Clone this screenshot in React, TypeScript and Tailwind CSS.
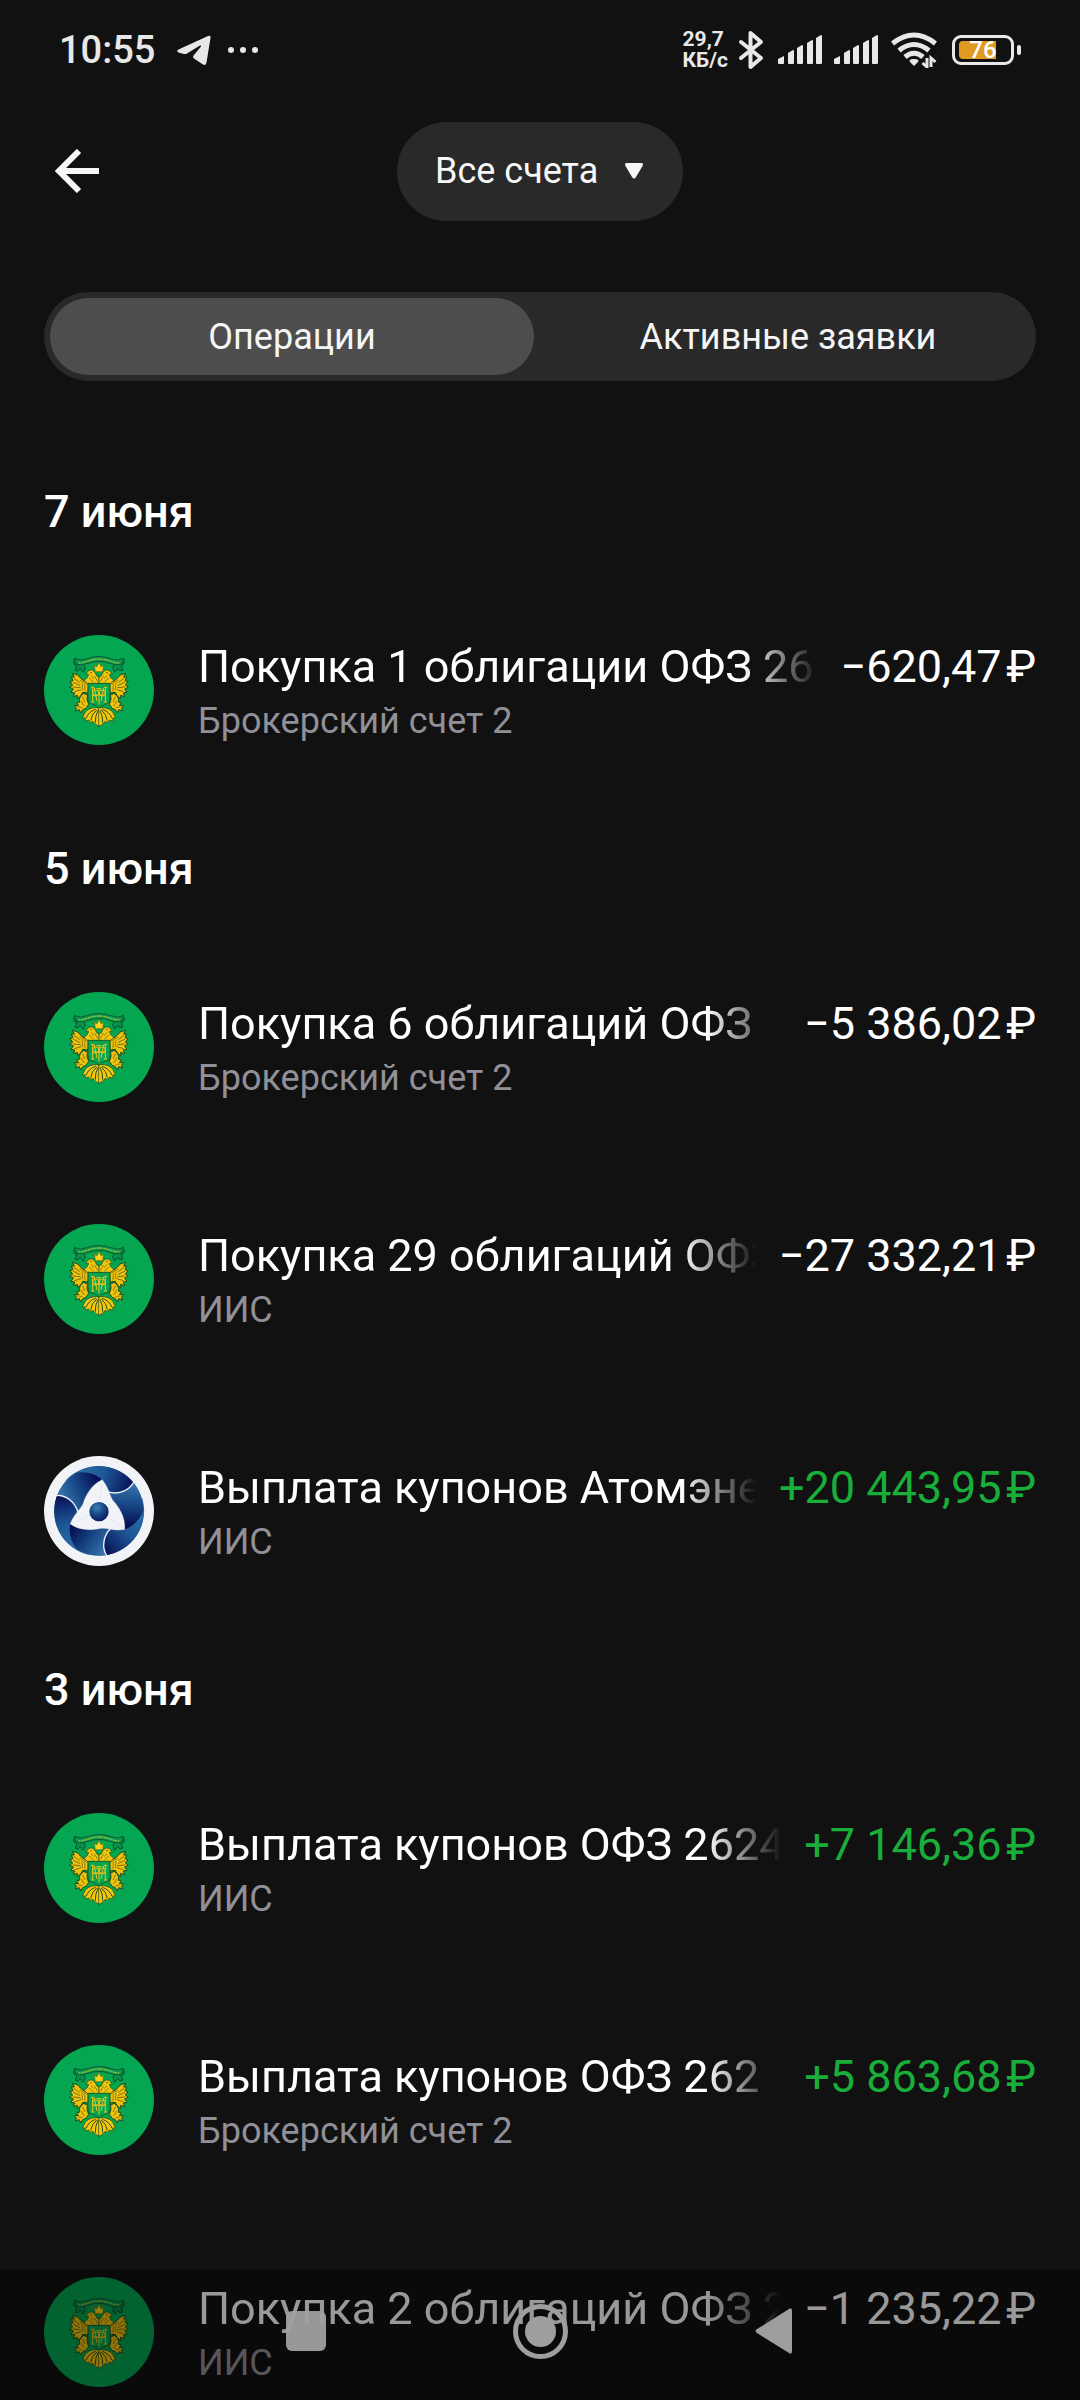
type Operation = {
  title: string;
  account: string;
  amount: string;
  income?: boolean;
  logo?: "eagle" | "atom";
};

type Day = { date: string; operations: Operation[] };

const DAYS: Day[] = [
  {
    date: "7 июня",
    operations: [{ title: "Покупка 1 облигации ОФЗ 26", account: "Брокерский счет 2", amount: "−620,47" }],
  },
  {
    date: "5 июня",
    operations: [
      { title: "Покупка 6 облигаций ОФЗ", account: "Брокерский счет 2", amount: "−5 386,02" },
      { title: "Покупка 29 облигаций ОФЗ", account: "ИИС", amount: "−27 332,21" },
      { title: "Выплата купонов Атомэне", account: "ИИС", amount: "+20 443,95", income: true, logo: "atom" },
    ],
  },
  {
    date: "3 июня",
    operations: [
      { title: "Выплата купонов ОФЗ 2624", account: "ИИС", amount: "+7 146,36", income: true },
      { title: "Выплата купонов ОФЗ 262", account: "Брокерский счет 2", amount: "+5 863,68", income: true },
      { title: "Покупка 2 облигаций ОФЗ 2", account: "ИИС", amount: "−1 235,22" },
    ],
  },
];

function HalfEagle() {
  return (
    <g strokeLinejoin="round" strokeLinecap="round">
      {/* ribbon tail */}
      <path d="M134 113 Q126 130 140 134 L136 148 Q146 154 150 142 L160 154 L166 140 L160 128 Z" fill="#07924a" stroke="#0a4f2e" strokeWidth="3" />
      {/* wing */}
      <path
        d="M128 158 L133 168 L124 168 L129 179 L120 182 L128 192 L119 199 L130 204 L123 214 L134 216 L130 227 L142 223 L142 233 L153 224 L158 214 L174 216 L176 182 Q160 182 152 172 Q144 158 128 158 Z"
        fill="#efc20e"
        stroke="#1f4a1c"
        strokeWidth="3"
      />
      <path d="M132 172 L148 184 M130 184 L149 193 M129 198 L151 200 M134 212 L153 206" stroke="#3b4a12" strokeWidth="2" fill="none" />
      <path d="M156 186 L158 206 M164 190 L165 210 M150 178 L172 190" stroke="#6b6110" strokeWidth="2" fill="none" />
      {/* neck and head */}
      <path d="M207 188 V168 Q200 168 196 156 Q188 142 176 149 L167 160 L176 160 L172 170 L162 178 L176 190 Z" fill="#f3c70e" stroke="#1f4a1c" strokeWidth="2" />
      <path d="M184 164 L190 172 M178 172 L190 182 M194 166 L202 180" stroke="#5a5710" strokeWidth="2" />
      <circle cx="183" cy="155" r="2" fill="#1f3b14" />
      {/* leg and claw */}
      <path d="M160 218 Q146 226 148 244 L140 246 L146 254 L133 254 L140 262 L136 270 L148 266 L152 276 L158 266 L168 262 L176 250 Q168 236 172 222 Z" fill="#efc20e" stroke="#1f4a1c" strokeWidth="3" />
      <path d="M158 228 L164 242 M153 240 L162 254 M146 258 L156 260" stroke="#4f5212" strokeWidth="2" />
      {/* tail feathers */}
      <path d="M207 260 L190 260 Q166 266 163 280 L157 290 L166 291 L165 300 L176 297 L180 305 L189 301 L195 309 L207 316 Z" fill="#f3c70e" stroke="#1f4a1c" strokeWidth="2" />
      <path d="M196 265 Q174 274 169 290 M200 267 Q184 280 182 298 M204 269 Q195 284 196 304" stroke="#2c4a16" strokeWidth="3" fill="none" />
    </g>
  );
}

function EagleLogo() {
  return (
    <svg viewBox="42 42 330 330" className="size-[110px] shrink-0" aria-hidden="true">
      <circle cx="207" cy="207" r="165" fill="#04a651" />
      <HalfEagle />
      <g transform="matrix(-1 0 0 1 414 0)">
        <HalfEagle />
      </g>
      {/* shield */}
      <path d="M174 187 H240 V232 Q240 246 226 250 Q212 254 207 262 Q202 254 188 250 Q174 246 174 232 Z" fill="#04a651" stroke="#1c5a26" strokeWidth="3" />
      <g stroke="#ecc31a" strokeWidth="3" fill="none">
        <path d="M183 199 H193 M188 199 V243 M183 243 H193 M221 199 H231 M226 199 V243 M221 243 H231 M188 222 H226" />
        <path d="M207 201 V250 M199 203 H215 M193 201 L201 240 M221 201 L213 240" />
        <circle cx="197" cy="216" r="9" />
        <circle cx="217" cy="216" r="9" />
      </g>
      {/* crown */}
      <path d="M193 132 L200 138 L207 125 L214 138 L221 132 L218 152 H196 Z" fill="#ffd21a" stroke="#6b6a12" strokeWidth="2" strokeLinejoin="round" />
      {/* ribbon */}
      <path d="M133 113 Q150 121 172 113 Q207 100 242 113 Q264 121 281 113 L276 129 Q256 135 240 127 Q207 116 174 127 Q158 135 138 129 Z" fill="#0b9a4c" stroke="#0a5a34" strokeWidth="3" strokeLinejoin="round" />
      <path d="M146 126 Q160 126 174 120 Q207 108 240 120 Q254 126 268 126" stroke="#9cc43a" strokeWidth="4" strokeDasharray="5 2" fill="none" />
    </svg>
  );
}

function AtomThird({ turn }: { turn: number }) {
  return (
    <g transform={`rotate(${turn} 207 209)`}>
      <path d="M105 120 A134 134 0 0 1 313 127 C292 150 260 155 236 152 L217 115 Q165 80 105 120 Z" fill="url(#atomOuter)" />
      <path d="M82 162 A134 134 0 0 1 140 94 Q185 88 217 115 L207 209 L143 212 C136 184 110 162 82 162 Z" fill="url(#atomBlade)" />
    </g>
  );
}

function AtomLogo() {
  const turns = [0, 120, 240];
  return (
    <svg viewBox="42 44 330 330" className="size-[110px] shrink-0" aria-hidden="true">
      <defs>
        <linearGradient id="atomOuter" gradientUnits="userSpaceOnUse" x1="150" y1="90" x2="300" y2="140">
          <stop offset="0" stopColor="#2a6ba6" />
          <stop offset="0.45" stopColor="#1d5795" />
          <stop offset="1" stopColor="#08145a" />
        </linearGradient>
        <linearGradient id="atomBlade" gradientUnits="userSpaceOnUse" x1="90" y1="160" x2="200" y2="110">
          <stop offset="0" stopColor="#3474ad" />
          <stop offset="0.55" stopColor="#15407f" />
          <stop offset="1" stopColor="#070f55" />
        </linearGradient>
        <radialGradient id="atomCore" cx="0.4" cy="0.3" r="0.75">
          <stop offset="0" stopColor="#3d7fb8" />
          <stop offset="0.5" stopColor="#174586" />
          <stop offset="1" stopColor="#081658" />
        </radialGradient>
      </defs>
      <circle cx="207" cy="209" r="165" fill="#f1f3f7" />
      <circle cx="207" cy="209" r="134" fill="#1d5795" />
      {turns.map((turn) => (
        <AtomThird key={turn} turn={turn} />
      ))}
      {turns.map((turn) => (
        <g key={turn} transform={`rotate(${turn} 207 209)`}>
          <path d="M76 162 C110 160 137 184 144 214" fill="none" stroke="#f1f3f7" strokeWidth="4" />
          <path d="M207 209 L217 115 C186 128 168 160 160 185 C153 205 132 216 121 248 Z" fill="#f1f3f7" stroke="#f1f3f7" />
        </g>
      ))}
      <circle cx="207" cy="211" r="29" fill="url(#atomCore)" />
    </svg>
  );
}

function SignalIcon() {
  return (
    <svg viewBox="0 0 44 30" className="h-[30px] w-11" fill="#e8e8e8" aria-hidden="true">
      <path d="M0 24 L6 21 V28 Q6 29 5 29 H1 Q0 29 0 28 Z" />
      <path d="M10 18 L15 15 Q16 15 16 16 V28 Q16 29 15 29 H11 Q10 29 10 28 Z" />
      <path d="M19 13 L24 10 Q25 10 25 11 V28 Q25 29 24 29 H20 Q19 29 19 28 Z" />
      <path d="M29 8 L34 5 Q35 5 35 6 V28 Q35 29 34 29 H30 Q29 29 29 28 Z" />
      <path d="M38 3 L43 0 Q44 0 44 1 V28 Q44 29 43 29 H39 Q38 29 38 28 Z" />
    </svg>
  );
}

function StatusBar() {
  return (
    <div className="flex h-[100px] shrink-0 items-center px-[59px] text-[#e8e8e8]">
      <span className="text-[38px] leading-[44px] font-medium">10:55</span>
      <svg viewBox="0 0 34 30" className="ml-[22px] h-[30px] w-[34px]" fill="#e8e8e8" aria-hidden="true">
        <path d="M31 1 Q34 0 33.500 3 L29.500 27.500 Q29 31 26 29.500 L17 23.500 Q15 22 17 20 L24 11.500 Q24.500 10 23 10.500 L10 18.500 Q8 19.500 6 18.800 L1.500 17.400 Q-1 16 1.500 14.500 Z" />
      </svg>
      <svg viewBox="0 0 32 8" className="ml-4 h-2 w-8" fill="#e8e8e8" aria-hidden="true">
        <circle cx="4" cy="4" r="3" />
        <circle cx="16" cy="4" r="3" />
        <circle cx="28" cy="4" r="3" />
      </svg>
      <div className="ml-auto flex items-center">
        <div className="flex flex-col text-[21px] leading-[21px] font-bold">
          <span>29,7</span>
          <span>КБ/с</span>
        </div>
        <svg viewBox="0 0 26 40" className="ml-[10px] h-10 w-[26px]" fill="none" stroke="#e8e8e8" strokeWidth="4" strokeLinejoin="round" strokeLinecap="round" aria-hidden="true">
          <path d="M3 12 L23 28 L12.500 37 V3 L23 12 L3 28" />
        </svg>
        <div className="ml-[14px] flex gap-3">
          <SignalIcon />
          <SignalIcon />
        </div>
        <svg viewBox="0 0 46 36" className="ml-[13px] h-9 w-[46px]" fill="none" stroke="#e8e8e8" strokeWidth="5" aria-hidden="true">
          <path d="M1.500 11.500 Q23 -5.500 44.500 11.500" />
          <path d="M8 18.500 Q23 6.500 38 18.500" />
          <path d="M14 25 Q23 17.500 32 25" />
          <path d="M23 27 Q29 27 27 30 L23 34 L19 30 Q17 27 23 27 Z" fill="#e8e8e8" stroke="none" />
          <path d="M36 26 V35 L31.500 31 M40 35 V26 L44.500 30" strokeWidth="3" />
        </svg>
        <div className="ml-[15px] flex items-center gap-[3px]">
          <div className="relative flex h-[30px] w-[62px] items-center justify-center rounded-[9px] border-[3px] border-[#e8e8e8]">
            <span className="absolute inset-y-[3px] left-1 w-[37px] rounded-l-sm bg-[#e09a22]" />
            <span className="relative text-[24px] leading-6 font-medium text-white">76</span>
          </div>
          <span className="h-[10px] w-1 rounded-full bg-[#e8e8e8]" />
        </div>
      </div>
    </div>
  );
}

function OperationRow({ title, account, amount, income, logo }: Operation) {
  return (
    <li className="flex h-[232px] items-center gap-11">
      {logo === "atom" ? <AtomLogo /> : <EagleLogo />}
      <div className="min-w-0 flex-1 pt-1">
        <div className="flex gap-[22px] text-[45px] leading-[58px] whitespace-nowrap">
          <span className="min-w-0 flex-1 overflow-hidden text-white [mask-image:linear-gradient(to_right,black_calc(100%-76px),transparent)]">{title}</span>
          <span className={income ? "text-[#19ae3a]" : "text-white"}>{amount}&#8202;₽</span>
        </div>
        <div className="text-[36px] leading-[50px] text-[#909098]">{account}</div>
      </div>
    </li>
  );
}

export default function App() {
  return (
    <div className="relative flex h-screen flex-col overflow-hidden bg-[#111111] font-['Roboto',sans-serif] text-white">
      <StatusBar />
      <header className="grid h-[142px] shrink-0 grid-cols-[1fr_auto_1fr] items-center px-11">
        <button type="button" aria-label="Назад" className="flex size-[66px] items-center justify-center">
          <svg viewBox="0 0 44 44" className="size-11" fill="none" stroke="#f7f7f7" strokeWidth="6" aria-hidden="true">
            <path d="M44 22 H4 M24 2 L4 22 L24 42" />
          </svg>
        </button>
        <label className="relative flex items-center">
          <span className="sr-only">Счет</span>
          <select className="h-[99px] appearance-none rounded-full bg-[#292929] pr-[84px] pl-[38px] text-[36px] text-[#f7f7f7]">
            <option>Все счета</option>
          </select>
          <svg viewBox="0 0 20 16" className="pointer-events-none absolute right-[39px] h-4 w-5" fill="#f7f7f7" aria-hidden="true">
            <path d="M3 0 H17 Q20 0 18.500 3 L12 14 Q10 17 8 14 L1.500 3 Q0 0 3 0 Z" />
          </svg>
        </label>
      </header>
      <div role="tablist" className="mx-11 mt-[50px] grid h-[89px] shrink-0 grid-cols-2 gap-3 rounded-full bg-[#292929] p-[6px] text-[36px] text-[#f5f5f5]">
        <button type="button" role="tab" aria-selected="true" className="rounded-full bg-[#4d4d4d]">
          Операции
        </button>
        <button type="button" role="tab" aria-selected="false" className="rounded-full">
          Активные заявки
        </button>
      </div>
      <main className="mt-[68px] min-h-0 flex-1 overflow-y-auto px-11 [scrollbar-width:none]">
        {DAYS.map((day) => (
          <section key={day.date}>
            <h2 className="flex h-[125px] items-center text-[45px] font-medium">{day.date}</h2>
            <ul>
              {day.operations.map((operation) => (
                <OperationRow key={operation.title} {...operation} />
              ))}
            </ul>
          </section>
        ))}
      </main>
      <nav className="absolute inset-x-0 bottom-0 flex h-[130px] items-center justify-center gap-44 bg-black/40 pb-2">
        <button type="button" aria-label="Недавние" className="flex size-[58px] items-center justify-center">
          <span className="size-10 rounded-md bg-[#a0a0a0]/95" />
        </button>
        <button type="button" aria-label="Домой" className="flex size-[58px] items-center justify-center">
          <span className="flex size-[55px] items-center justify-center rounded-full border-[5px] border-[#9e9e9e]">
            <span className="size-[31px] rounded-full bg-[#9e9e9e]" />
          </span>
        </button>
        <button type="button" aria-label="Назад" className="flex size-[58px] items-center justify-center">
          <svg viewBox="0 0 38 46" className="h-[46px] w-[38px]" fill="#9e9e9e" aria-hidden="true">
            <path d="M34 1 Q37 -1 37 3 V43 Q37 47 34 45 L2 25 Q-1 23 2 21 Z" />
          </svg>
        </button>
      </nav>
    </div>
  );
}
